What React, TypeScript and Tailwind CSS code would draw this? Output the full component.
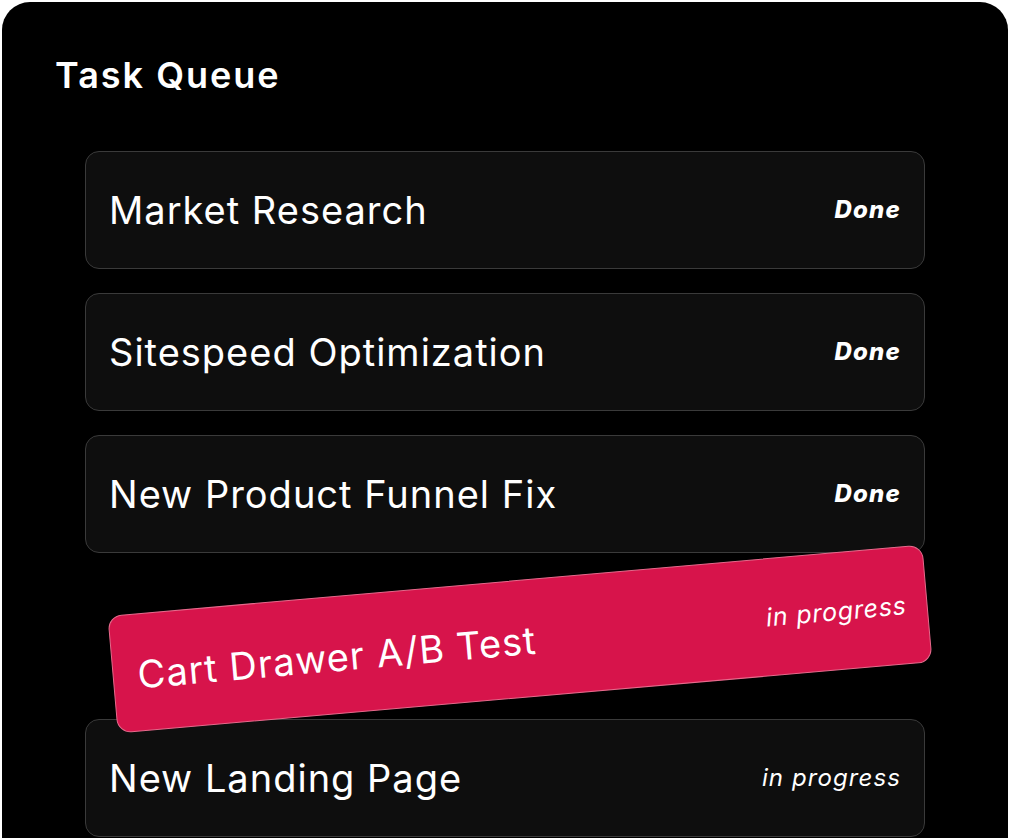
import React from "react";

type Task = { title: string; status: string; done?: boolean };

const before: Task[] = [
  { title: "Market Research", status: "Done", done: true },
  { title: "Sitespeed Optimization", status: "Done", done: true },
  { title: "New Product Funnel Fix", status: "Done", done: true },
];

const after: Task[] = [{ title: "New Landing Page", status: "in progress" }];

const Row = ({ task }: { task: Task }) => (
  <div className="flex h-[118px] items-center justify-between rounded-[14px] border border-[#3a3a3a] bg-[#0e0e0e] px-[23px]">
    <span className="text-[38px] leading-none tracking-[1px] text-white">{task.title}</span>
    <span
      className={
        task.done
          ? "text-[24px] font-extrabold italic leading-none tracking-[1.2px] text-white"
          : "text-[24px] italic leading-none tracking-[1.1px] text-white"
      }
    >
      {task.status}
    </span>
  </div>
);

const App = () => {
  return (
    <div
      className="h-[838px] w-full overflow-hidden bg-white p-[2px]"
      style={{ fontFamily: "Inter, 'Noto Sans', sans-serif" }}
    >
      <div className="h-[900px] w-[1006px] rounded-[28px] bg-black">
        <h1 className="pl-[53px] pt-[55px] text-[36px] font-semibold leading-none tracking-[2px] text-white">
          Task Queue
        </h1>

        <div className="mt-[58px] flex flex-col gap-[24px] px-[83px]">
          {before.map((t) => (
            <Row key={t.title} task={t} />
          ))}

          {/* slot with the dragged card */}
          <div className="relative h-[118px]">
            <div className="absolute left-[26px] top-[3px] z-10 flex h-[118px] w-[818px] rotate-[-5deg] items-center justify-between rounded-[14px] border border-[#e66a8c] bg-[#d7144b] pl-[24px] pr-[20px]">
              <span className="mt-[4px] text-[38px] leading-none tracking-[1px] text-white">
                Cart Drawer A/B Test
              </span>
              <span className="text-[25px] italic leading-none tracking-[0.8px] text-white">
                in progress
              </span>
            </div>
          </div>

          {after.map((t) => (
            <Row key={t.title} task={t} />
          ))}
        </div>
      </div>
    </div>
  );
};

export default App;
